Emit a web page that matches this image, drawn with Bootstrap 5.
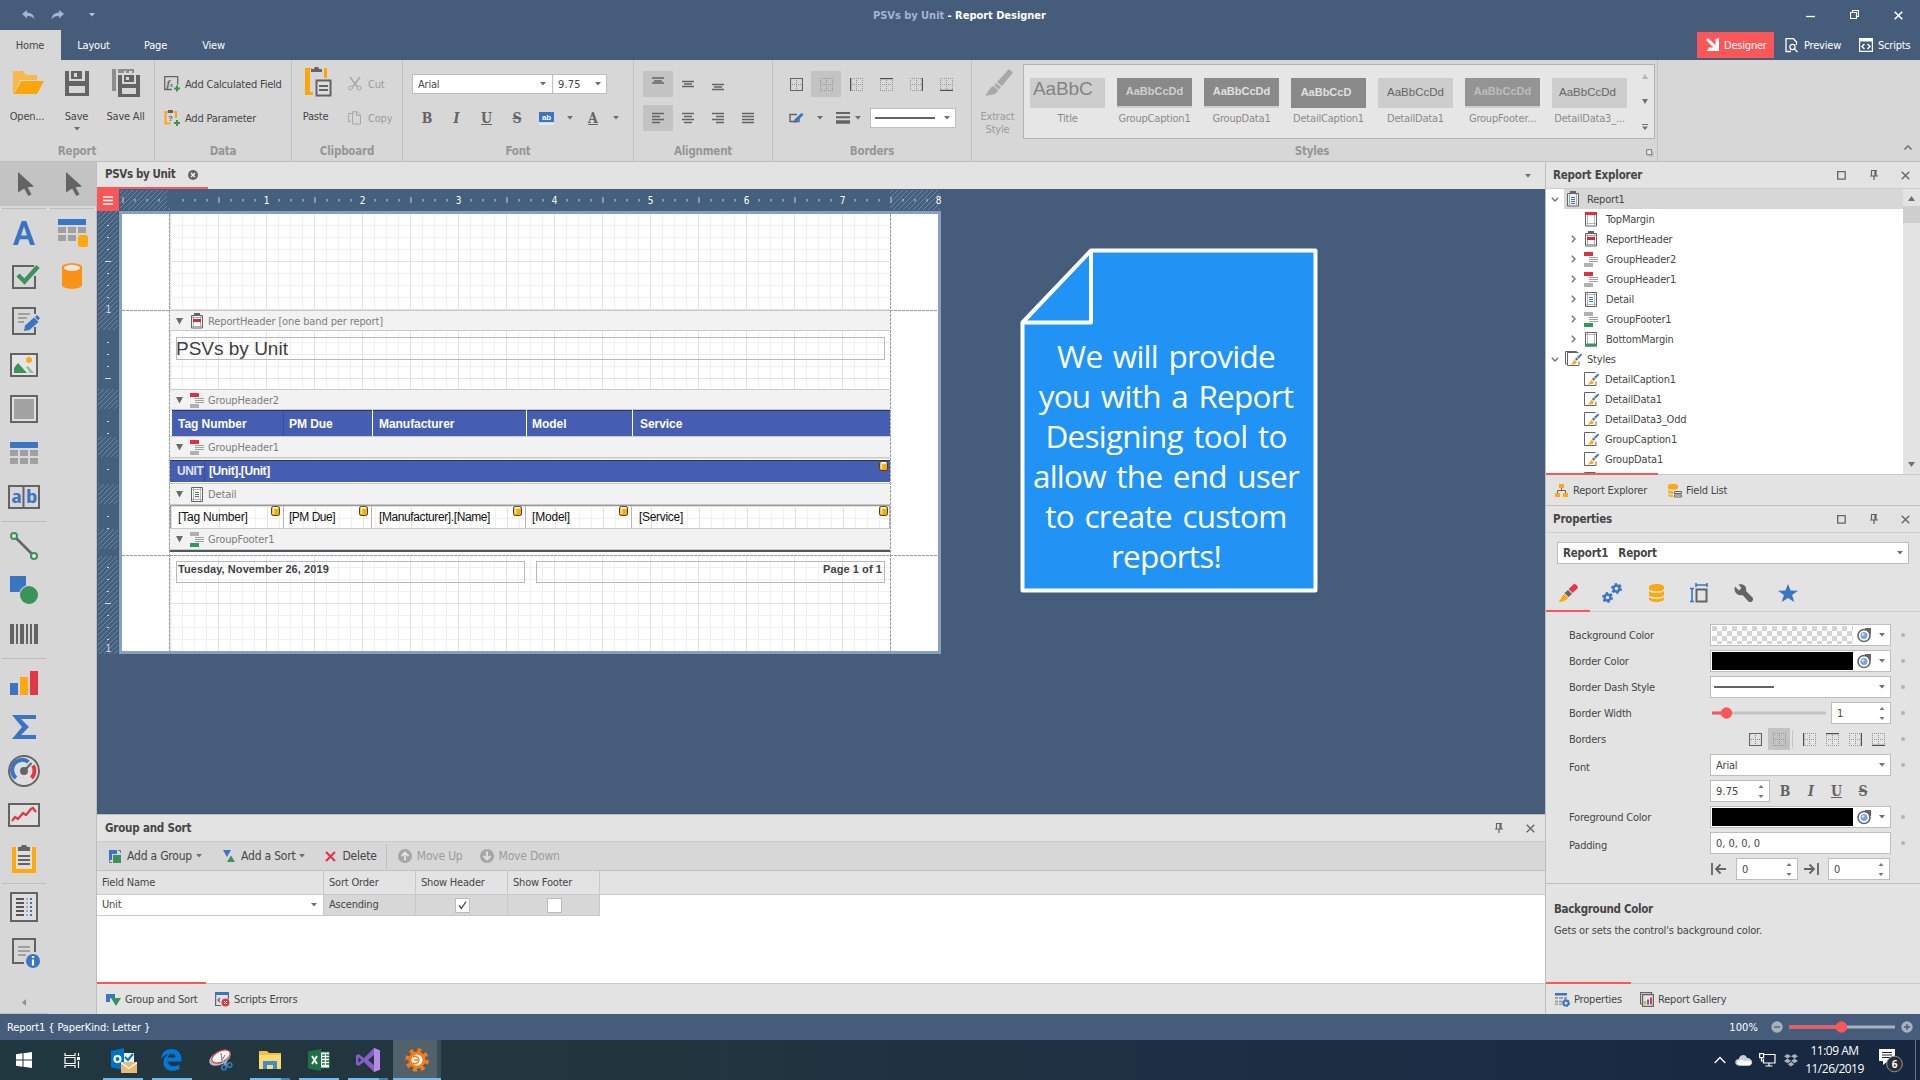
<!DOCTYPE html>
<html lang="en">
<head>
<meta charset="utf-8">
<title>PSVs by Unit - Report Designer</title>
<meta name="viewport" content="width=device-width, initial-scale=1">
<link rel="stylesheet" href="https://cdn.jsdelivr.net/npm/bootstrap@5.3.0/dist/css/bootstrap.min.css">
<style>
:root{--navy:#465c7b;--panel:#e3e3e3;--rib:#d7d7d7;--sel:#c3c3c3;--red:#fb5759;--ink:#464646;--line:#c6c6c6;--b:#3a75c4;--g:#3a9358;--y:#ffa90f;--k:#646464}
html,body{height:100%;overflow:hidden}
body{width:1920px;height:1080px;font-family:"DejaVu Sans Condensed","DejaVu Sans",sans-serif;font-stretch:condensed;font-size:11px;letter-spacing:-.2px;line-height:15px;color:var(--ink);background:var(--navy)}
svg{display:block;flex:none}
.fb{font-weight:700}
.arial{font-family:"Liberation Sans",Arial,sans-serif;letter-spacing:0}
.titlebar{height:30px;color:#fff;letter-spacing:-.03px}
.titlebar .dim{color:#a3b5d1}
.tabrow{height:30px;color:#fff}
.rtab{height:30px;line-height:32px;text-align:center;padding-right:1px}
.rtab.active{background:var(--rib);color:var(--ink)}
.viewbtn{height:26px;margin-top:2px}
.ribbon{height:102px;background:var(--rib);border-bottom:1px solid #bdbdbd}
.rgroup{border-right:1px solid #c0c0c0;height:101px;padding-top:7px}
.rgroup .gbody{height:74px}
.rgroup .gname{height:18px;line-height:18px;text-align:center;font-weight:700;font-size:11.5px;color:#969696;margin-top:1px}
.big{text-align:center}
.bigico{height:42px}
.off{color:#9b9b9b}
.r34{height:34px}
.fld{background:#fff;border:1px solid #bdbdbd}
.tb{width:30px;height:26px}
.tb.on{background:var(--sel)}
.slab{font-family:"DejaVu Serif","Liberation Serif",serif;font-stretch:condensed;font-weight:700;font-size:14px;color:var(--k);letter-spacing:0;line-height:16px;text-align:center}
.gallery{width:632px;height:75px;background:#e6e6e6;border:1.5px solid #b2b2b2;margin-top:-3px}
.gitem{width:87px;text-align:center;color:#8a8a8a;line-height:14px}
.gprev{width:75px;height:30px;line-height:28px;margin:13px 0 4px 6px;font-size:11.5px;overflow:hidden;white-space:nowrap}
.gi-dark,.gi-mid{font-weight:700;font-size:11px;line-height:27px;border-bottom:2px solid #cfcfcf}
.gi-dark{background:#898989;color:#d0d0d0}
.gi-mid{background:#949494;color:#bdbdbd}
.gi-light{background:#cdcdcd;color:#666}
.toolcol{width:48px}
.tcell{height:44px}
.tsep{height:5px;padding:2px 2px 0}
.tsep div{border-top:1px solid #bebebe}
.toolbox{width:97px;background:var(--rib);border-right:1px solid #bdbdbd}
.workarea{height:852px}
.doctabs{height:27px;background:var(--panel)}
.doctab{width:111px;height:27px;border-bottom:2px solid var(--red);font-size:11.5px}
.surface{height:625px;background:var(--navy)}
.sheet{width:822px;height:443px;border:3px solid #87a0bd;background:#fff}
.marg{width:48px;flex:none}
.canvas{width:720px;flex:none}
.gridbg{background-color:#fff;background-image:linear-gradient(to right,#e1e1e1 1px,transparent 1px),linear-gradient(#e1e1e1 1px,transparent 1px),linear-gradient(to right,#f0f0f0 1px,transparent 1px),linear-gradient(#f0f0f0 1px,transparent 1px);background-size:48px 48px,48px 48px,12px 12px,12px 12px}
.bandbar{background:#f2f2f2;border-top:1px solid #c9c9c9;border-bottom:1px solid #c9c9c9;color:#7d7d7d;padding:1px 0 0 6px;letter-spacing:-.12px}
.bandbar svg:first-child{margin-right:7px}
.lbx{border:1px solid #b9b9b9}
.thead-c{background:#455eb2;color:#fff;font-weight:700;border-top:1px solid #26356f;line-height:27px;font-size:12px;letter-spacing:-.05px;white-space:nowrap}
.dcell{border-right:1px solid #b5b5b5;color:#111;line-height:23px;font-size:12px;white-space:nowrap}
.dashh{position:absolute;height:1px;background:repeating-linear-gradient(to right,#9a9a9a 0 3px,transparent 3px 4px)}
.dashv{position:absolute;width:1px;top:0;bottom:0;background:repeating-linear-gradient(#9a9a9a 0 3px,transparent 3px 4px)}
.note{position:absolute;left:923px;top:59px;width:300px;height:345px}
.note svg{position:absolute;left:0;top:0}
.note p{position:relative;margin:0;padding:88px 8px 0 0;text-align:center;color:#fff;font:31.5px/40px "Open Sans","Noto Sans",sans-serif;letter-spacing:-.75px;word-spacing:3px;white-space:nowrap}
.gs{height:200px;background:#fff;border-top:1px solid #bdbdbd}
.phead{background:var(--panel);font-weight:700;font-size:11.5px}
.gstool{height:30px;background:var(--rib);border-top:1px solid #ccc;border-bottom:1px solid #c0c0c0;font-size:12px;letter-spacing:-.2px}
.gcol{border-right:1px solid #c9c9c9;padding-left:5px}
.chk{width:15px;height:15px;background:#fff;border:1px solid #bdbdbd}
.ptabs{height:31px;background:var(--panel);border-top:1px solid #c9c9c9}
.ptab{height:32px;margin-top:-2px;border-top:2px solid transparent;padding-top:1px}
.ptab.active{border-color:var(--red)}
.rpanel{width:375px;background:var(--panel);border-left:1px solid #bdbdbd}
.trow{height:20px}
.tree{height:285px;background:#fff;overflow:hidden}
.vscroll{width:17px;background:var(--panel)}
.prow{height:26px;padding-left:23px}
.plabel{width:141px}
.pfield{width:181px;height:22px;background:#fff;border:1px solid #bdbdbd}
.dot{width:4px;height:4px;border-radius:50%;background:#b3b3b3;margin-left:10px}
.swatch{width:141px;height:18px;margin-left:1px;background:#000}
.checker{background:conic-gradient(#fff 25%,#d4d4d4 0 50%,#fff 0 75%,#d4d4d4 0);background-size:10px 10px}
.statusbar{height:26px;color:#fff;letter-spacing:-.12px}
.taskbar{height:40px;background:linear-gradient(to right,#21373f,#22353f 35%,#1b2c44 75%,#182740);color:#fff;font-family:"Open Sans","Noto Sans",sans-serif;font-stretch:normal;font-size:12px;letter-spacing:-.5px}
.tk{width:49px;height:40px;position:relative}
.tk.run::after{content:"";position:absolute;left:5px;right:4px;bottom:0;height:2px;background:#76b9ed}
.tk.multi::after{background:linear-gradient(to right,#76b9ed 31px,#4c7fa8 31px)}
.tk.act{background:linear-gradient(to right,transparent 1px,#51626b 1px 45px,#3a4c56 45px)}
.tk.act::after{left:1px;right:0}
</style>
<script src="https://cdn.jsdelivr.net/npm/bootstrap@5.3.0/dist/js/bootstrap.bundle.min.js"></script>
</head>
<body class="d-flex flex-column">

<svg width="0" height="0" class="position-absolute">
  <defs>
    <symbol id="caret" viewBox="0 0 6 4"><path d="M0 0h6L3 3.500z" fill="#707070"/></symbol>
    <symbol id="dots" viewBox="0 0 13 13"><path d="M.5 0v13M6.500 0v13M12.500 0v13M0 .5h13M0 6.500h13M0 12.500h13" stroke="#969696" stroke-dasharray="1 1" fill="none"/></symbol>
    <symbol id="ball" viewBox="0 0 13 13"><path d="M6.500 2v9M2 6.500h9" stroke="#888" stroke-dasharray="1 1"/><path d="M.5.5h12v12H.5z" fill="none" stroke="#646464" stroke-width="1.200"/></symbol>
    <symbol id="rh" viewBox="0 0 14 16"><path d="M1.500 2.500h11v12.500h-11z" fill="#fff" stroke="#646464"/><path d="M3.500 3v12M10.500 3v12M2 4.500h10M2 13.500h10" stroke="#aaa"/><path d="M4 0h6v3H4z" fill="#646464"/><path d="M3 6h8v3H3z" fill="#e0243a"/></symbol>
    <symbol id="gh" viewBox="0 0 14 15"><path d="M0 0h9v4H0z" fill="#e0303e"/><path d="M0 11h9v4H0z" fill="#b0b0b0"/><path d="M5 5.500h9M5 7.500h9M5 9.500h9" stroke="#a0a0a0"/></symbol>
    <symbol id="gf" viewBox="0 0 14 15"><path d="M0 0h9v4H0z" fill="#b0b0b0"/><path d="M0 11h9v4H0z" fill="#2f9a58"/><path d="M5 5.500h9M5 7.500h9M5 9.500h9" stroke="#a0a0a0"/></symbol>
    <symbol id="det" viewBox="0 0 14 15"><path d="M1.500.5h11v14h-11z" fill="#fff" stroke="#646464"/><path d="M3.500 1v13M10.500 1v13M2 2.500h10M2 12.500h10" stroke="#b5b5b5"/><path d="M5 5.500h4M5 7.500h4M5 9.500h4" stroke="#3a75c4"/></symbol>
    <symbol id="tm" viewBox="0 0 14 15"><path d="M1.500.5h11v13.500h-11z" fill="#fff" stroke="#646464"/><path d="M3.500 2v12M10.500 2v12M2 11.500h10" stroke="#b5b5b5"/><path d="M1 0h12v3H1z" fill="#e0303e"/></symbol>
    <symbol id="bm" viewBox="0 0 14 15"><path d="M1.500.5h11v13.500h-11z" fill="#fff" stroke="#646464"/><path d="M3.500 1v12M10.500 1v12M2 2.500h10" stroke="#b5b5b5"/><path d="M1 11.500h12v3H1z" fill="#3a9358"/></symbol>
    <symbol id="rep" viewBox="0 0 14 16"><path d="M1.500 2.500h11v12.500h-11z" fill="#eee" stroke="#646464"/><path d="M3.500 3v12M10.500 3v12" stroke="#aaa"/><path d="M4 0h6v3H4z" fill="#646464"/><path d="M5 6.500h4M5 8.500h4M5 10.500h4M5 12.500h4" stroke="#3a75c4"/></symbol>
    <symbol id="sty" viewBox="0 0 15 15"><path d="M12 9.500v4H.5V.5h11" fill="none" stroke="#646464"/><path d="M14.500 1.200l-4.500 3.800 1.500 1.800 3.500-3.800z" fill="#3a75c4"/><path d="M9.500 5.500l-1.500 1.500 1.800 1.800 1.400-1.600z" fill="#646464"/><path d="M7.500 7.800L4 12.800l5-1 .8-1.800z" fill="#ffa90f"/></symbol>
    <symbol id="db" viewBox="0 0 9 10"><rect x=".5" y=".5" width="8" height="9" rx="1.800" fill="#f0ae1c" stroke="#5e3a08"/><path d="M1.800 1.800h5.400" stroke="#fff" stroke-width="1.800"/><path d="M1.500 3h1.800v5H1.500z" fill="#fde28a"/></symbol>
    <symbol id="ptr" viewBox="0 0 16 24"><path d="M0 0l16 14.500-6.500.7 4 7-3.300 1.800-4-7.500L0 20.500z" fill="#646464"/></symbol>
    <symbol id="tri" viewBox="0 0 7 7"><path d="M0 0h7L3.500 6.500z" fill="#6a6a6a"/></symbol>
    <symbol id="sq" viewBox="0 0 9 9"><path d="M.7.7h7.500v7.500H.7z" fill="none" stroke="#646464" stroke-width="1.300"/></symbol>
    <symbol id="pin" viewBox="0 0 8 10"><path d="M1 .5h6M1.500 0v6M5 0v6M6 0v6M0 6h8M4 6v4" stroke="#646464" stroke-width="1.200" fill="none"/></symbol>
    <symbol id="xx" viewBox="0 0 9 9"><path d="M.7.7l7.600 7.600M8.300.7L.7 8.300" stroke="#646464" stroke-width="1.300"/></symbol>
    <symbol id="eye" viewBox="0 0 15 15"><path d="M14 0v6H8V0z" fill="#646464"/><circle cx="7" cy="7.500" r="6" fill="#fff" stroke="#646464" stroke-width="1.600"/><circle cx="7" cy="7.500" r="3.500" fill="#7ba4de"/><circle cx="6" cy="6.500" r="1.300" fill="#cfe0f7"/></symbol>
    <symbol id="spin" viewBox="0 0 6 13"><path d="M.5 3h5L3 0zM.5 10h5L3 13z" fill="#777"/></symbol>
    <symbol id="cr" viewBox="0 0 5 8"><path d="M.8.8L4 4 .8 7.200" fill="none" stroke="#777" stroke-width="1.500"/></symbol>
    <symbol id="cd" viewBox="0 0 8 5"><path d="M.8.8L4 4 7.200.8" fill="none" stroke="#777" stroke-width="1.500"/></symbol>
    <pattern id="hatch" width="5" height="5" patternUnits="userSpaceOnUse"><path d="M-1 6L6 -1M-1 1L1 -1M4 6L6 4" stroke="#7189a9" stroke-width=".9"/></pattern>
    <pattern id="tkx" x="3.500" y="0" width="48" height="22" patternUnits="userSpaceOnUse"><path d="M.5 8v6M12.500 10v2.500M24.500 10v2.500M36.500 10v2.500" stroke="#c6d2e2"/></pattern>
  </defs>
</svg>

<!-- title bar -->
<header class="titlebar d-flex align-items-center">
  <div class="d-flex align-items-center" style="width:873px;padding-left:22px">
    <svg width="13" height="10"><path d="M0 4L5 0v2.500c5 .3 7 3 7.500 7C11 7 9 6 5 6v2.500z" fill="#a3b5d1"/></svg>
    <svg width="13" height="10" class="ms-3"><path d="M13 4L8 0v2.500C3 2.800 1 5.500.5 9.500 2 7 4 6 8 6v2.500z" fill="#a3b5d1"/></svg>
    <svg width="6" height="4" style="margin-left:25px"><path d="M0 0h6L3 3.500z" fill="#b7c4d8"/></svg>
  </div>
  <div class="fb flex-grow-1"><span class="dim">PSVs by Unit</span> - Report Designer</div>
  <div class="d-flex align-items-center" style="padding-right:17px;gap:35px">
    <svg width="9" height="9"><path d="M0 5.500h9" stroke="#fff" stroke-width="1.300"/></svg>
    <svg width="9" height="10"><path d="M.5 2.500h6v6h-6zM2.500 2.500v-2h6v6h-2" fill="none" stroke="#fff" stroke-width="1.200"/></svg>
    <svg width="9" height="9"><path d="M.7.7l7.600 7.600M8.300.7L.7 8.300" stroke="#fff" stroke-width="1.600"/></svg>
  </div>
</header>

<!-- ribbon tabs -->
<nav class="tabrow d-flex">
  <div class="rtab active" style="width:61px">Home</div>
  <div class="rtab" style="width:66px">Layout</div>
  <div class="rtab" style="width:58px">Page</div>
  <div class="rtab" style="width:58px">View</div>
  <div class="ms-auto d-flex">
    <div class="viewbtn d-flex align-items-center" style="background:var(--red);width:77px;padding-left:9px;gap:4px"><svg width="14" height="14"><path d="M0 2l2-2 7.500 7V1L13 0v13H1l2-3.500h4.500z" fill="#fff"/></svg>Designer</div>
    <div class="viewbtn d-flex align-items-center" style="width:84px;padding-left:11px;gap:5px"><svg width="14" height="15"><path d="M6 13.500H1V.7h7.500L11.500 4v3" fill="none" stroke="#fff" stroke-width="1.300"/><circle cx="7.500" cy="9" r="2.600" fill="none" stroke="#fff" stroke-width="1.200"/><path d="M9.500 11l3 3" stroke="#fff" stroke-width="1.300"/></svg>Preview</div>
    <div class="viewbtn d-flex align-items-center" style="width:62px;padding-left:1px;gap:5px"><svg width="14" height="14"><path d="M.6.6h12.800v12.800H.6z" fill="none" stroke="#fff" stroke-width="1.200"/><path d="M0 0h14v3.500H0z" fill="#fff"/><path d="M5.500 6L3 8.500 5.500 11M8.500 6L11 8.500 8.500 11" fill="none" stroke="#fff" stroke-width="1.400"/></svg>Scripts</div>
  </div>
</nav>

<!-- ribbon -->
<section class="ribbon d-flex">
  <div class="rgroup" style="width:155px">
    <div class="gbody d-flex">
      <div class="big" style="width:54px"><div class="bigico" style="padding:4px 0 0 13px"><svg width="31" height="23"><path d="M0 0h10l3 4h11v5H7L1 23H0z" fill="#f9b84c"/><path d="M8 10h23l-7 13H1z" fill="#ffa50a"/></svg></div>Open...</div>
      <div class="big" style="width:45px"><div class="bigico" style="padding:4px 0 0 11px"><svg width="24" height="25"><path d="M0 0h4v10h16V0h4v25H0zM4 15v7h16v-7z" fill="#646464" fill-rule="evenodd"/><path d="M6 0h11v8H6zM9 2v4h3V2z" fill="#646464" fill-rule="evenodd"/></svg></div>Save<div class="d-flex justify-content-center" style="margin-top:3px"><svg width="6" height="4"><use href="#caret"/></svg></div></div>
      <div class="big" style="width:53px"><div class="bigico" style="padding:2px 0 0 13px"><svg width="28" height="29"><path d="M0 0h4v22H0zM6 0h16v4h-2V2h-3v2h-3V2h-2v2H6z" fill="#8d8d8d"/><path d="M6 6h4v9h14V6h4v22H6zM10 19v6h14v-6z" fill="#646464" fill-rule="evenodd"/><path d="M12 6h10v7H12zM14 8v3h3V8z" fill="#646464" fill-rule="evenodd"/></svg></div>Save All</div>
    </div>
    <div class="gname">Report</div>
  </div>
  <div class="rgroup" style="width:137px">
    <div class="gbody" style="padding-left:9px">
      <div class="r34 d-flex align-items-center" style="gap:5px"><svg width="16" height="16"><path d="M8 13.500H.7V.7h13v8" fill="none" stroke="#646464" stroke-width="1.300"/><text x="2.500" y="10.500" font-family="Liberation Serif" font-style="italic" font-weight="700" font-size="11" fill="#646464" letter-spacing="-.5">f<tspan font-size="7">x</tspan></text><path d="M10 12.500h6M13 9.500v6" stroke="#3a9358" stroke-width="2"/></svg>Add Calculated Field</div>
      <div class="r34 d-flex align-items-center" style="gap:5px"><svg width="16" height="16"><path d="M4 2H1.500v11.500h5M10 2h2v6" fill="none" stroke="#ffa50a" stroke-width="2"/><path d="M4 0h5v3H4z" fill="#646464"/><text x="4" y="11" font-family="Liberation Sans" font-weight="700" font-size="8" fill="#646464">?</text><path d="M10 13h6M13 10v6" stroke="#3a9358" stroke-width="2"/></svg>Add Parameter</div>
    </div>
    <div class="gname">Data</div>
  </div>
  <div class="rgroup" style="width:111px">
    <div class="gbody d-flex">
      <div class="big" style="width:47px"><div class="bigico" style="padding-left:13px"><svg width="27" height="31"><path d="M7 2H2v23h6v3H0V1h7zM19 1h3v10h-3V4z" fill="#ffa50a"/><path d="M0 2h5v26H0z" fill="#ffa50a"/><path d="M6 5V2h3c0-3 5-3 5 0h3v3z" fill="#646464"/><path d="M11.500 13.500h14v15h-14z" fill="#ddd" stroke="#646464" stroke-width="2"/><path d="M14 19h9M14 23h9" stroke="#646464" stroke-width="2"/></svg></div>Paste</div>
      <div style="padding-left:9px">
        <div class="r34 d-flex align-items-center off" style="gap:6px"><svg width="14" height="14"><path d="M2 0l7.500 10M12 0L4.500 10" stroke="#a8a8a8" stroke-width="1.600"/><circle cx="2.500" cy="11" r="2" fill="none" stroke="#a8a8a8"/><circle cx="11" cy="11" r="2" fill="none" stroke="#a8a8a8"/></svg>Cut</div>
        <div class="r34 d-flex align-items-center off" style="gap:6px"><svg width="14" height="14"><path d="M3 10.500H.7V2.500h5M4.500.7H9L12.500 4v9h-8z" fill="none" stroke="#a8a8a8"/><path d="M8.500 1v3.500H12" fill="none" stroke="#a8a8a8"/></svg>Copy</div>
      </div>
    </div>
    <div class="gname">Clipboard</div>
  </div>
  <div class="rgroup" style="width:231px">
    <div class="gbody" style="padding-left:9px">
      <div class="r34 d-flex align-items-center">
        <div class="fld d-flex align-items-center justify-content-between" style="width:141px;height:20px;padding:0 6px 0 5px">Arial<svg width="6" height="4"><use href="#caret"/></svg></div>
        <div class="fld d-flex align-items-center justify-content-between" style="width:55px;height:20px;padding:0 5px;margin-left:-1px;letter-spacing:.2px">9.75<svg width="6" height="4"><use href="#caret"/></svg></div>
      </div>
      <div class="r34 d-flex align-items-center">
        <div class="slab" style="width:30px">B</div><div class="slab fst-italic" style="width:29px">I</div><div class="slab text-decoration-underline" style="width:31px">U</div><div class="slab text-decoration-line-through" style="width:30px">S</div>
        <svg width="15" height="13" style="margin:0 13px 0 7px"><rect width="15" height="10" fill="#3a75c4"/><rect y="11" width="15" height="2" fill="#e8e8e8"/><text x="3" y="8" font-family="Liberation Sans" font-weight="700" font-size="8" letter-spacing="-.3" fill="#fff">ab</text></svg>
        <svg width="6" height="4"><use href="#caret"/></svg>
        <div class="slab text-decoration-underline" style="width:40px">A</div><svg width="6" height="4"><use href="#caret"/></svg>
      </div>
    </div>
    <div class="gname">Font</div>
  </div>
  <div class="rgroup" style="width:139px">
    <div class="gbody" style="padding-left:9px">
      <div class="r34 d-flex align-items-center">
        <div class="tb on"><svg width="30" height="26"><path d="M9 7h12M11 10h8M9 12h12" stroke="#646464" stroke-width="1.500"/></svg></div>
        <div class="tb"><svg width="30" height="26"><path d="M9 10.500h12M11 13h8M9 15.500h12" stroke="#646464" stroke-width="1.500"/></svg></div>
        <div class="tb"><svg width="30" height="26"><path d="M9 13.500h12M11 16h8M9 18.500h12" stroke="#646464" stroke-width="1.500"/></svg></div>
      </div>
      <div class="r34 d-flex align-items-center">
        <div class="tb on"><svg width="30" height="26"><path d="M9 8.500h12M9 11.500h8M9 14.500h12M9 17.500h8" stroke="#646464" stroke-width="1.500"/></svg></div>
        <div class="tb"><svg width="30" height="26"><path d="M9 8.500h12M11 11.500h8M9 14.500h12M11 17.500h8" stroke="#646464" stroke-width="1.500"/></svg></div>
        <div class="tb"><svg width="30" height="26"><path d="M9 8.500h12M13 11.500h8M9 14.500h12M13 17.500h8" stroke="#646464" stroke-width="1.500"/></svg></div>
        <div class="tb"><svg width="30" height="26"><path d="M9 8.500h12M9 11.500h12M9 14.500h12M9 17.500h12" stroke="#646464" stroke-width="1.500"/></svg></div>
      </div>
    </div>
    <div class="gname">Alignment</div>
  </div>
  <div class="rgroup" style="width:199px">
    <div class="gbody" style="padding-left:8px">
      <div class="r34 d-flex align-items-center">
        <div class="tb d-flex align-items-center justify-content-center"><svg width="13" height="13"><use href="#ball"/></svg></div>
        <div class="tb on d-flex align-items-center justify-content-center"><svg width="13" height="13"><use href="#dots"/></svg></div>
        <div class="tb d-flex align-items-center justify-content-center"><svg width="13" height="13"><use href="#dots"/><path d="M.6 0v13" stroke="#505050" stroke-width="1.300"/></svg></div>
        <div class="tb d-flex align-items-center justify-content-center"><svg width="13" height="13"><use href="#dots"/><path d="M0 .6h13" stroke="#505050" stroke-width="1.300"/></svg></div>
        <div class="tb d-flex align-items-center justify-content-center"><svg width="13" height="13"><use href="#dots"/><path d="M12.400 0v13" stroke="#505050" stroke-width="1.300"/></svg></div>
        <div class="tb d-flex align-items-center justify-content-center"><svg width="13" height="13"><use href="#dots"/><path d="M0 12.400h13" stroke="#505050" stroke-width="1.300"/></svg></div>
      </div>
      <div class="r34 d-flex align-items-center" style="padding-left:8px">
        <svg width="15" height="11"><path d="M8 1.500H1v7h9V6" fill="none" stroke="#646464" stroke-width="1.400"/><path d="M4.500 10l1-3.500L12.500 0l2 1.500L8 9z" fill="#3a75c4"/></svg>
        <svg width="6" height="4" style="margin-left:13px"><use href="#caret"/></svg>
        <svg width="14" height="12" style="margin-left:13px"><path d="M0 1h14M0 5.200h14" stroke="#646464" stroke-width="2"/><path d="M0 10h14" stroke="#646464" stroke-width="3.500"/></svg>
        <svg width="6" height="4" style="margin-left:5px"><use href="#caret"/></svg>
        <div class="fld d-flex align-items-center justify-content-between" style="width:86px;height:20px;margin-left:9px;padding:0 5px 0 4px"><svg width="60" height="2"><path d="M0 1h60" stroke="#646464" stroke-width="2"/></svg><svg width="6" height="4"><use href="#caret"/></svg></div>
      </div>
    </div>
    <div class="gname">Borders</div>
  </div>
  <div class="rgroup" style="width:686px">
    <div class="gbody d-flex">
      <div class="big off" style="width:51px;line-height:13px"><div class="bigico" style="padding:2px 0 0 13px;height:43px"><svg width="28" height="27"><path d="M24 0l4 3.500L17 17l-5-4z" fill="#a8a8a8"/><path d="M11 14l5 4-2 2.500-4.500-4z" fill="#a8a8a8"/><path d="M8.500 17l4.500 4c-1 4-6 5.500-13 5.500 3-2 4-8 8.500-9.500z" fill="#a8a8a8"/></svg></div>Extract<br>Style</div>
      <div class="gallery d-flex">
        <div class="gitem"><div class="gprev gi-light arial text-start" style="font-size:19px;line-height:21px;color:#848484;padding-left:3px;letter-spacing:-.1px">AaBbC</div>Title</div>
        <div class="gitem"><div class="gprev gi-dark arial">AaBbCcDd</div>GroupCaption1</div>
        <div class="gitem"><div class="gprev gi-dark arial" style="color:#e0e0e0">AaBbCcDd</div>GroupData1</div>
        <div class="gitem"><div class="gprev gi-dark arial" style="border-color:#898989;color:#e0e0e0;line-height:29px;padding-right:5px">AaBbCcD</div>DetailCaption1</div>
        <div class="gitem"><div class="gprev gi-light arial">AaBbCcDd</div>DetailData1</div>
        <div class="gitem"><div class="gprev gi-mid arial">AaBbCcDd</div>GroupFooter...</div>
        <div class="gitem"><div class="gprev gi-light arial" style="padding-right:4px">AaBbCcDd</div>DetailData3_...</div>
        <div class="d-flex flex-column" style="padding:9px 0 0 9px;gap:20px"><svg width="7" height="5"><path d="M0 5h6L3 0z" fill="#b5b5b5"/></svg><svg width="7" height="5"><path d="M0 0h6L3 5z" fill="#707070"/></svg><svg width="7" height="7"><path d="M0 .5h6" stroke="#707070"/><path d="M0 2.500h6L3 6z" fill="#707070"/></svg></div>
      </div>
    </div>
    <div class="d-flex"><div class="gname flex-grow-1" style="padding-right:5px">Styles</div><svg width="8" height="8" style="margin:8px 3px 0 -11px"><path d="M.7.7h5v5h-5z" fill="#e8e8e8" stroke="#777"/><path d="M3 7h4V3" fill="none" stroke="#aaa"/></svg></div>
  </div>
  <div class="flex-grow-1 d-flex justify-content-end align-items-end" style="padding:0 8px 11px 0"><svg width="8" height="5"><path d="M.5 4.500L4 1l3.500 3.500" fill="none" stroke="#777" stroke-width="1.600"/></svg></div>
</section>

<!-- work area -->
<main class="workarea d-flex">
  <aside class="toolbox d-flex">
    <div class="toolcol">
      <div class="tcell d-flex align-items-center justify-content-center" style="background:var(--sel);padding-left:3px"><svg width="16" height="24"><use href="#ptr"/></svg></div>
      <div class="tsep"><div></div></div>
      <div class="tcell d-flex align-items-center justify-content-center"><svg width="22" height="24"><path d="M8.700 0h4.600L22 24h-4.800l-2-5.800H6.800L4.800 24H0zM11 5.500L8 14.500h6z" fill="#3a75c4" fill-rule="evenodd"/></svg></div>
      <div class="tcell d-flex align-items-center justify-content-center" style="padding-left:3px"><svg width="28" height="26"><path d="M22 2H1v22h22V12" fill="none" stroke="#646464" stroke-width="2"/><path d="M6 11l6.500 6.500L26 2.500" fill="none" stroke="#3a9358" stroke-width="4.500"/></svg></div>
      <div class="tcell d-flex align-items-center justify-content-center" style="padding-left:3px"><svg width="28" height="28"><path d="M23 7V1H1v26h22v-7" fill="none" stroke="#646464" stroke-width="2"/><path d="M6 7h12M6 11h9M6 15h6" stroke="#a0a0a0" stroke-width="2"/><path d="M12 24l1-5.500 9-8 4.500 4.500-9 8z" fill="#3a75c4"/><path d="M23 10l2-2 3 3-2 2.500z" fill="#3a75c4"/></svg></div>
      <div class="tcell d-flex align-items-center justify-content-center"><svg width="28" height="24"><path d="M1 1h26v22H1z" fill="#e4e4e4" stroke="#646464" stroke-width="2"/><path d="M4 20v-5l4-5 9 10z" fill="#3a9358"/><path d="M16 14l2-1 6 7h-4z" fill="#86c49a"/><circle cx="19" cy="7" r="3" fill="#ffa90f"/></svg></div>
      <div class="tcell d-flex align-items-center justify-content-center"><svg width="28" height="28"><path d="M1 1h26v26H1z" fill="#e0e0e0" stroke="#646464" stroke-width="2"/><path d="M4 4h20v20H4z" fill="#a2a2a2"/></svg></div>
      <div class="tcell d-flex align-items-center justify-content-center"><svg width="28" height="22"><path d="M0 0h28v6H0z" fill="#3a75c4"/><path d="M0 8h8v6H0zM10 8h8v6h-8zM20 8h8v6h-8zM0 16h8v6H0zM10 16h8v6h-8zM20 16h8v6h-8z" fill="#a0a0a0"/></svg></div>
      <div class="tcell d-flex align-items-center justify-content-center"><svg width="32" height="24"><path d="M1 1h30v22H1zM15.500 0v24" fill="none" stroke="#646464" stroke-width="2"/><text x="3.500" y="18" font-family="Open Sans" font-weight="700" font-size="17" fill="#3a75c4" textLength="10" lengthAdjust="spacingAndGlyphs">a</text><text x="18" y="18" font-family="Open Sans" font-weight="700" font-size="17" fill="#3a75c4" textLength="11" lengthAdjust="spacingAndGlyphs">b</text></svg></div>
      <div class="tsep"><div></div></div>
      <div class="tcell d-flex align-items-center justify-content-center"><svg width="28" height="28"><path d="M6 6l16 16" stroke="#646464" stroke-width="2.500"/><circle cx="4" cy="4" r="3" fill="#e8e8e8" stroke="#3a9358" stroke-width="2"/><circle cx="24" cy="24" r="3" fill="#e8e8e8" stroke="#3a9358" stroke-width="2"/></svg></div>
      <div class="tcell d-flex align-items-center justify-content-center"><svg width="28" height="28"><path d="M0 0h16v16H0z" fill="#3a75c4"/><circle cx="19" cy="19" r="10" fill="#d7d7d7"/><circle cx="19" cy="19" r="9" fill="#3a9358"/></svg></div>
      <div class="tcell d-flex align-items-center justify-content-center"><svg width="28" height="20"><path d="M0 0h4v20H0zM6 0h2v20H6zM10 0h4v20h-4zM16 0h2v20h-2zM20 0h2v20h-2zM24 0h4v20h-4z" fill="#646464"/></svg></div>
      <div class="tsep"><div></div></div>
      <div class="tcell d-flex align-items-center justify-content-center"><svg width="28" height="24"><path d="M0 12h8v12H0z" fill="#3a75c4"/><path d="M10 6h8v18h-8z" fill="#ffa90f"/><path d="M20 0h8v24h-8z" fill="#e03848"/></svg></div>
      <div class="tcell d-flex align-items-center justify-content-center"><svg width="24" height="24"><path d="M0 0h24v4H9l8 8-8 8h15v4H0l10-12z" fill="#3a75c4"/></svg></div>
      <div class="tcell d-flex align-items-center justify-content-center"><svg width="32" height="32"><circle cx="16" cy="16" r="15" fill="#dedede" stroke="#646464" stroke-width="2"/><path d="M8 23A10 10 0 0 1 20.500 7" fill="none" stroke="#3a75c4" stroke-width="4"/><path d="M25 10.500A10 10 0 0 1 23.500 23" fill="none" stroke="#e03848" stroke-width="4"/><circle cx="16" cy="16" r="4" fill="#646464"/><path d="M16 16l7.500-8" stroke="#646464" stroke-width="2"/></svg></div>
      <div class="tcell d-flex align-items-center justify-content-center"><svg width="32" height="24"><path d="M1 1h30v22H1z" fill="#e0e0e0" stroke="#646464" stroke-width="2"/><path d="M4 18l3-4 3 2 5-6 3 2 5-6 2-1 3 4" fill="none" stroke="#e03848" stroke-width="2.200"/></svg></div>
      <div class="tcell d-flex align-items-center justify-content-center"><svg width="24" height="28"><path d="M0 2h24v26H0z" fill="#ffa90f"/><path d="M4 2h16v22H4z" fill="#dedede"/><path d="M6 6V2h3c0-3 6-3 6 0h3v4z" fill="#646464"/><path d="M6 11h12M6 15h12M6 19h12" stroke="#646464" stroke-width="2"/></svg></div>
      <div class="tsep"><div></div></div>
      <div class="tcell d-flex align-items-center justify-content-center" style="padding-bottom:2px"><svg width="28" height="30"><path d="M1 1h26v28H1z" fill="#dedede" stroke="#646464" stroke-width="2"/><path d="M6 7h8M6 11h8M6 15h8M6 19h8M6 23h8" stroke="#555" stroke-width="2"/><path d="M16 7h2M16 11h2M16 15h2M16 19h2M16 23h2" stroke="#aaa" stroke-width="2"/><path d="M20 7h2M20 11h2M20 15h2M20 19h2M20 23h2" stroke="#3a75c4" stroke-width="2"/></svg></div>
      <div class="tcell d-flex align-items-center justify-content-center" style="padding:2px 0 0 4px"><svg width="28" height="30"><path d="M12 25H1V1h22v13" fill="none" stroke="#646464" stroke-width="2"/><path d="M6 9h12M6 13h12M6 17h8" stroke="#a0a0a0" stroke-width="2"/><circle cx="21" cy="23" r="7" fill="#3a75c4"/><path d="M21 18v2M21 21.500v6" stroke="#fff" stroke-width="2.200"/></svg></div>
      <div class="d-flex align-items-end justify-content-center" style="height:40px;padding-bottom:7px;border-bottom:1px solid #bdbdbd"><svg width="4" height="7"><path d="M4 0v7L0 3.500z" fill="#909090"/></svg></div>
    </div>
    <div class="toolcol">
      <div class="tcell d-flex align-items-center justify-content-center" style="background:var(--sel);padding-left:3px"><svg width="16" height="24"><use href="#ptr"/></svg></div>
      <div class="tsep"><div></div></div>
      <div class="tcell d-flex align-items-center justify-content-center" style="padding-left:2px"><svg width="30" height="28"><path d="M0 0h28v6H0z" fill="#3a75c4"/><path d="M0 8h8v6H0zM10 8h8v6h-8zM20 8h8v6h-8zM0 16h8v6H0zM10 16h8v6h-8z" fill="#a0a0a0"/><rect x="20" y="16" width="10" height="12" rx="2.500" fill="#ffa90f"/></svg></div>
      <div class="tcell d-flex align-items-center justify-content-center" style="padding-bottom:2px"><svg width="20" height="26"><path d="M0 4v18c0 5 20 5 20 0V4c0-5-20-5-20 0z" fill="#fa9216"/><ellipse cx="10" cy="4.800" rx="8" ry="3" fill="#e6e6e6"/></svg></div>
    </div>
  </aside>

  <section class="d-flex flex-column" style="width:1448px">
    <div class="doctabs d-flex">
      <div class="doctab fb d-flex align-items-center" style="padding-left:8px;gap:13px;letter-spacing:-.38px">PSVs by Unit<svg width="10" height="10"><circle cx="5" cy="5" r="5" fill="#646464"/><path d="M3 3l4 4M7 3L3 7" stroke="#eee" stroke-width="1.500"/></svg></div>
      <div class="ms-auto" style="padding:12px 14px 0 0"><svg width="6" height="4"><use href="#caret"/></svg></div>
    </div>

    <div class="surface position-relative">
      <div class="d-flex">
        <div style="width:22px;height:22px;background:var(--red);padding:7px 0 0 6px"><svg width="10" height="9"><path d="M0 1h10M0 4.500h10M0 8h10" stroke="#fff" stroke-width="1.300"/></svg></div>
        <svg width="824" height="22" font-family="DejaVu Sans Condensed,DejaVu Sans" font-size="10" fill="#fff" text-anchor="middle">
          <rect width="822" height="22" fill="#45607c"/>
          <rect x="1" y="1" width="50" height="20" fill="url(#hatch)"/><rect x="771" y="1" width="50" height="20" fill="url(#hatch)"/>
          <rect x="3" width="814" height="22" fill="url(#tkx)"/>
          <g fill="#45607c"><path d="M143 4h10v14h-10zM239 4h10v14h-10zM335 4h10v14h-10zM431 4h10v14h-10zM527 4h10v14h-10zM623 4h10v14h-10zM719 4h10v14h-10zM48 4h6v14h-6z"/></g>
          <text x="147.500" y="14.500">1</text><text x="243.500" y="14.500">2</text><text x="339.500" y="14.500">3</text><text x="435.500" y="14.500">4</text><text x="531.500" y="14.500">5</text><text x="627.500" y="14.500">6</text><text x="723.500" y="14.500">7</text><text x="819.500" y="14.500">8</text>
        </svg>
      </div>
      <div class="d-flex">
        <svg width="22" height="443" font-family="DejaVu Sans Condensed,DejaVu Sans" font-size="10" fill="#cfdae8">
          <rect width="21" height="443" fill="#45607c"/>
          <path d="M1 0h20v119H1zM1 178h20v20H1zM1 226h20v20H1zM1 273h20v20H1zM1 318h20v20H1zM1 345h20v98H1z" fill="url(#hatch)"/>
          <path d="M10 14.500h2M10 26.500h2M10 38.500h2M8 50.500h6M10 62.500h2M10 74.500h2M10 86.500h2M10 131.500h2M10 143.500h2M10 155.500h2M8 167.500h6M10 210.500h2M10 222.500h2M10 258.500h2M10 305.500h2M10 317.500h2M10 356.500h2M10 368.500h2M10 380.500h2M8 392.500h6M10 404.500h2M10 416.500h2M10 428.500h2" stroke="#cfdae8"/>
          <text x="8.500" y="102">1</text><text x="8.500" y="441">1</text>
        </svg>
        <div class="sheet position-relative d-flex">
          <div class="marg"></div>
          <div class="canvas">
            <div class="gridbg" style="height:96px;background-position-y:-1px"></div>
            <div class="bandbar d-flex align-items-center" style="height:21px"><svg width="7" height="7"><use href="#tri"/></svg><svg width="14" height="16" class="me-1"><use href="#rh"/></svg>ReportHeader [one band per report]</div>
            <div class="gridbg" style="height:58px;padding:6px 5px 0 6px;background-position-y:-1px"><div class="lbx arial" style="height:23px;font-size:19px;line-height:22px;color:#404040;text-indent:-1px">PSVs by Unit</div></div>
            <div class="bandbar d-flex align-items-center" style="height:21px"><svg width="7" height="7"><use href="#tri"/></svg><svg width="14" height="15" class="me-1"><use href="#gh"/></svg>GroupHeader2</div>
            <div class="d-flex arial" style="height:26px;padding-left:2px">
              <div class="thead-c" style="width:112px;padding-left:6px;border-right:1px solid #344c9c">Tag Number</div>
              <div class="thead-c" style="width:88px;padding-left:5px;margin-right:1px">PM Due</div>
              <div class="thead-c" style="width:153px;padding-left:6px;margin-right:1px">Manufacturer</div>
              <div class="thead-c" style="width:105px;padding-left:5px;margin-right:1px">Model</div>
              <div class="thead-c flex-grow-1" style="padding-left:7px">Service</div>
            </div>
            <div class="bandbar d-flex align-items-center" style="height:22px"><svg width="7" height="7"><use href="#tri"/></svg><svg width="14" height="15" class="me-1"><use href="#gh"/></svg>GroupHeader1</div>
            <div class="gridbg arial" style="height:25px;padding-top:2px">
              <div class="d-flex" style="border-bottom:1px solid #fff"><div class="thead-c" style="width:35px;padding-left:7px;height:22px;line-height:21px;color:#dfe3f3;border-right:1px solid #344c9c;letter-spacing:-.4px">UNIT</div><div class="thead-c d-flex flex-grow-1" style="padding:0 2px 0 4px;height:22px;line-height:21px;letter-spacing:-.4px">[Unit].[Unit]<svg width="9" height="10" class="ms-auto"><use href="#db"/></svg></div></div>
            </div>
            <div class="bandbar d-flex align-items-center" style="height:22px"><svg width="7" height="7"><use href="#tri"/></svg><svg width="14" height="15" class="me-1"><use href="#det"/></svg>Detail</div>
            <div class="gridbg arial d-flex" style="height:23px;border-top:1px solid #999;border-left:1px solid #999">
              <div class="dcell d-flex" style="width:113px;padding:0 3px 0 7px;letter-spacing:-.2px">[Tag Number]<svg width="9" height="10" class="ms-auto"><use href="#db"/></svg></div>
              <div class="dcell d-flex" style="width:88px;padding:0 3px 0 5px;letter-spacing:-.5px">[PM Due]<svg width="9" height="10" class="ms-auto"><use href="#db"/></svg></div>
              <div class="dcell d-flex" style="width:154px;padding:0 3px 0 7px;letter-spacing:-.4px">[Manufacturer].[Name]<svg width="9" height="10" class="ms-auto"><use href="#db"/></svg></div>
              <div class="dcell d-flex" style="width:106px;padding:0 3px 0 6px;letter-spacing:-.2px">[Model]<svg width="9" height="10" class="ms-auto"><use href="#db"/></svg></div>
              <div class="dcell d-flex flex-grow-1" style="padding:0 1px 0 7px;letter-spacing:-.3px">[Service]<svg width="9" height="10" class="ms-auto"><use href="#db"/></svg></div>
            </div>
            <div class="bandbar d-flex align-items-center" style="height:22px"><svg width="7" height="7"><use href="#tri"/></svg><svg width="14" height="15" class="me-1"><use href="#gf"/></svg>GroupFooter1</div>
            <div style="height:5px;border-top:2px solid #50555e"></div>
            <div class="gridbg arial fb d-flex" style="height:96px;padding:6px 5px 0 6px;font-size:11px;color:#404247;letter-spacing:.08px">
              <div class="lbx" style="width:349px;height:22px;line-height:14px;padding-left:1px">Tuesday, November 26, 2019</div>
              <div class="lbx text-end" style="width:349px;height:22px;line-height:14px;margin-left:11px;padding-right:2px">Page 1 of 1</div>
            </div>
          </div>
          <div class="dashv" style="left:47px"></div><div class="dashv" style="left:768px"></div>
          <div class="dashh" style="left:0;width:48px;top:96px"></div><div class="dashh" style="left:768px;width:48px;top:96px"></div>
          <div class="dashh" style="left:0;width:816px;top:341px"></div>
        </div>
      </div>
      <div class="note">
        <svg width="300" height="345"><path d="M2 74.500L70.500 2.500h224.500v340H2z" transform="translate(0.500 0)" fill="#2193f5" stroke="#fff" stroke-width="4" stroke-linejoin="round"/><path d="M71 2.500v72H2.500" fill="none" stroke="#fff" stroke-width="4" stroke-linejoin="round"/></svg>
        <p>We will provide<br>you with a Report<br>Designing tool to<br>allow the end user<br>to create custom<br>reports!</p>
      </div>
    </div>

    <div class="gs d-flex flex-column">
      <div class="phead d-flex align-items-center" style="height:26px;padding:0 10px 0 8px">Group and Sort<svg width="8" height="10" class="ms-auto" style="margin-right:23px"><use href="#pin"/></svg><svg width="9" height="9"><use href="#xx"/></svg></div>
      <div class="gstool d-flex align-items-center" style="padding-left:12px">
        <svg width="12" height="13"><path d="M0 0h8v4H3v6H0z" fill="#3a75c4"/><path d="M4 5h8v8H4z" fill="#3a9358"/><path d="M9 .5h2.500V3M.5 10v2.500H3" fill="none" stroke="#777"/></svg>
        <span style="margin:0 4px 0 6px">Add a Group</span><svg width="6" height="4"><use href="#caret"/></svg>
        <svg width="12" height="13" style="margin:0 6px 0 21px"><path d="M0 0h8L4 7z" fill="#3a75c4"/><path d="M4 12h8L8 5.500z" fill="#3a9358"/></svg>
        <span style="margin-right:4px">Add a Sort</span><svg width="6" height="4"><use href="#caret"/></svg>
        <svg width="11" height="11" style="margin:0 6px 0 20px"><path d="M1 1l9 9M10 1L1 10" stroke="#e03848" stroke-width="2.200"/></svg>Delete
        <div style="height:25px;border-left:1px solid #c0c0c0;margin:0 11px 0 9px"></div>
        <svg width="14" height="14"><circle cx="7" cy="7" r="7" fill="#a6a6a6"/><path d="M7 11.500V4M3.500 7L7 3.500 10.500 7" fill="none" stroke="#e3e3e3" stroke-width="1.800"/></svg><span class="off" style="margin:0 17px 0 5px">Move Up</span>
        <svg width="14" height="14"><circle cx="7" cy="7" r="7" fill="#a6a6a6"/><path d="M7 2.500V10M3.500 7L7 10.500 10.500 7" fill="none" stroke="#e3e3e3" stroke-width="1.800"/></svg><span class="off" style="margin-left:5px">Move Down</span>
      </div>
      <div class="d-flex" style="height:24px;line-height:23px;background:var(--panel);border-bottom:1px solid #c9c9c9">
        <div class="gcol" style="width:227px">Field Name</div><div class="gcol" style="width:92px">Sort Order</div><div class="gcol" style="width:92px">Show Header</div><div class="gcol" style="width:92px">Show Footer</div>
      </div>
      <div class="d-flex" style="height:21px;line-height:20px">
        <div class="gcol d-flex align-items-center justify-content-between" style="width:227px;padding-right:6px;border-bottom:1px solid #c9c9c9">Unit<svg width="6" height="4"><use href="#caret"/></svg></div>
        <div class="d-flex" style="background:var(--rib);border-bottom:1px solid #c9c9c9">
          <div class="gcol" style="width:92px">Ascending</div>
          <div class="gcol" style="width:92px;padding:3px 0 0 39px"><div class="chk"><svg width="13" height="13"><path d="M3 6.500L5.500 9.500 10 2.500" fill="none" stroke="#464646" stroke-width="1.300"/></svg></div></div>
          <div class="gcol" style="width:92px;padding:3px 0 0 39px"><div class="chk"></div></div>
        </div>
      </div>
      <div class="ptabs d-flex mt-auto">
        <div class="ptab active d-flex align-items-center" style="width:109px;padding-left:9px;gap:4px"><svg width="15" height="12"><path d="M0 0h9v4H4v4H0z" fill="#3a75c4"/><path d="M5 4h10l-5 8z" fill="#3a9358"/></svg>Group and Sort</div>
        <div class="ptab d-flex align-items-center" style="padding-left:9px;gap:4px"><svg width="15" height="15"><path d="M6 13.500H.6V1h12.800v6" fill="none" stroke="#646464" stroke-width="1.200"/><path d="M0 0h14v3H0z" fill="#3a75c4"/><path d="M5 6L3 8l2 2" fill="none" stroke="#646464" stroke-width="1.300"/><circle cx="10.500" cy="10.500" r="4" fill="#e03848"/><path d="M9 9l3 3M12 9l-3 3" stroke="#fff"/></svg>Scripts Errors</div>
      </div>
    </div>
  </section>

  <!-- right dock -->
  <aside class="rpanel d-flex flex-column">
    <div class="phead d-flex align-items-center" style="height:27px;border-bottom:1px solid #ccc;padding:0 10px 0 7px">Report Explorer<svg width="9" height="9" class="ms-auto"><use href="#sq"/></svg><svg width="8" height="10" style="margin:0 23px 0 24px"><use href="#pin"/></svg><svg width="9" height="9"><use href="#xx"/></svg></div>
    <div class="d-flex">
      <div class="tree flex-grow-1">
        <div class="trow d-flex align-items-center" style="padding-left:5px"><svg width="8" height="5" style="margin-right:5px"><use href="#cd"/></svg><div class="d-flex align-items-center flex-grow-1" style="background:var(--rib);height:20px;padding-left:2px"><svg width="14" height="16" style="margin-right:7px"><use href="#rep"/></svg>Report1</div></div>
        <div class="trow d-flex align-items-center" style="padding-left:38px;gap:8px"><svg width="14" height="15"><use href="#tm"/></svg>TopMargin</div>
        <div class="trow d-flex align-items-center" style="padding-left:25px;gap:8px"><svg width="5" height="8"><use href="#cr"/></svg><svg width="14" height="16"><use href="#rh"/></svg>ReportHeader</div>
        <div class="trow d-flex align-items-center" style="padding-left:25px;gap:8px"><svg width="5" height="8"><use href="#cr"/></svg><svg width="14" height="15"><use href="#gh"/></svg>GroupHeader2</div>
        <div class="trow d-flex align-items-center" style="padding-left:25px;gap:8px"><svg width="5" height="8"><use href="#cr"/></svg><svg width="14" height="15"><use href="#gh"/></svg>GroupHeader1</div>
        <div class="trow d-flex align-items-center" style="padding-left:25px;gap:8px"><svg width="5" height="8"><use href="#cr"/></svg><svg width="14" height="15"><use href="#det"/></svg>Detail</div>
        <div class="trow d-flex align-items-center" style="padding-left:25px;gap:8px"><svg width="5" height="8"><use href="#cr"/></svg><svg width="14" height="15"><use href="#gf"/></svg>GroupFooter1</div>
        <div class="trow d-flex align-items-center" style="padding-left:25px;gap:8px"><svg width="5" height="8"><use href="#cr"/></svg><svg width="14" height="15"><use href="#bm"/></svg>BottomMargin</div>
        <div class="trow d-flex align-items-center" style="padding-left:5px"><svg width="8" height="5" style="margin-right:6px"><use href="#cd"/></svg><svg width="17" height="16" style="margin-right:5px"><path d="M2.500 13H.5V.5h11V2" fill="none" stroke="#646464"/><use href="#sty" x="2" y="1" width="15" height="15"/></svg>Styles</div>
        <div class="trow d-flex align-items-center" style="padding-left:38px;gap:6px"><svg width="15" height="15"><use href="#sty"/></svg>DetailCaption1</div>
        <div class="trow d-flex align-items-center" style="padding-left:38px;gap:6px"><svg width="15" height="15"><use href="#sty"/></svg>DetailData1</div>
        <div class="trow d-flex align-items-center" style="padding-left:38px;gap:6px"><svg width="15" height="15"><use href="#sty"/></svg>DetailData3_Odd</div>
        <div class="trow d-flex align-items-center" style="padding-left:38px;gap:6px"><svg width="15" height="15"><use href="#sty"/></svg>GroupCaption1</div>
        <div class="trow d-flex align-items-center" style="padding-left:38px;gap:6px"><svg width="15" height="15"><use href="#sty"/></svg>GroupData1</div>
        <div class="trow d-flex align-items-center" style="padding-left:38px"><svg width="15" height="15"><use href="#sty"/></svg></div>
      </div>
      <div class="vscroll d-flex flex-column align-items-center justify-content-between" style="padding:7px 0"><svg width="7" height="5"><path d="M0 5h7L3.500 0z" fill="#707070"/></svg><div style="width:17px;height:17px;background:#cfcfcf;margin:5px 0 auto"></div><svg width="7" height="5"><path d="M0 0h7L3.500 5z" fill="#707070"/></svg></div>
    </div>
    <div class="ptabs d-flex">
      <div class="ptab active d-flex align-items-center" style="width:112px;padding-left:9px;gap:5px"><svg width="13" height="13"><path d="M4 0h5v4H4zM0 9h5v4H0zM8 9h5v4H8z" fill="#ffa90f"/><path d="M6.500 4v2.500M2.500 9V6.500h8V9" fill="none" stroke="#646464"/></svg>Report Explorer</div>
      <div class="ptab d-flex align-items-center" style="padding-left:10px;gap:4px"><svg width="14" height="14"><path d="M0 2c0-3 10-3 10 0v2c0 2-10 2-10 0zM0 6c1 1 4 1.500 5 1.200V10C3 10 0 9 0 8zM0 10c1 1 4 1.200 5 1.200V13c-2 0-5-.5-5-2z" fill="#ffa90f"/><path d="M6.500 7.500h7v2h-7zM6.500 11h7v2h-7z" fill="#eee" stroke="#646464"/></svg>Field List</div>
    </div>
    <div class="phead d-flex align-items-center" style="height:28px;border-top:1px solid #c0c0c0;border-bottom:1px solid #ccc;padding:0 10px 0 7px">Properties<svg width="9" height="9" class="ms-auto"><use href="#sq"/></svg><svg width="8" height="10" style="margin:0 23px 0 24px"><use href="#pin"/></svg><svg width="9" height="9"><use href="#xx"/></svg></div>
    <div class="fld fb d-flex align-items-center" style="height:22px;margin:9px 11px 0;padding:0 5px;font-size:11.5px"><span style="margin-right:10px">Report1</span>Report<svg width="6" height="4" class="ms-auto"><use href="#caret"/></svg></div>
    <div class="d-flex align-items-center" style="height:48px;padding-top:11px;border-bottom:1px solid #ccc">
      <div style="width:44px;height:38px;border-bottom:2px solid var(--red);padding:10px 0 0 12px"><svg width="21" height="19"><path d="M16 0c2 0 4 2 4 4l-5.500 5-4-4z" fill="#e03848"/><path d="M10 6l4 4-3.500 3-4-4z" fill="#646464"/><path d="M6.500 10l3.500 3.500C8 17 5 18 0 18c3-1 3-6 6.500-8z" fill="#ffa90f"/></svg></div>
      <svg width="20" height="20" style="margin:0 27px 0 12px"><g fill="none" stroke="#3a75c4"><circle cx="5.500" cy="14.500" r="3" stroke-width="2.400"/><circle cx="5.500" cy="14.500" r="4.600" stroke-width="1.800" stroke-dasharray="2.400 2.400"/><circle cx="14.500" cy="5.500" r="3" stroke-width="2.400"/><circle cx="14.500" cy="5.500" r="4.600" stroke-width="1.800" stroke-dasharray="2.400 2.400"/></g></svg>
      <svg width="15" height="18" style="margin-right:26px"><path d="M0 3c0-4 15-4 15 0v2c0 3-15 3-15 0zM0 7c2 2.500 13 2.500 15 0v4c0 3-15 3-15 0zM0 13c2 2.500 13 2.500 15 0v2c0 4-15 4-15 0z" fill="#ffa90f"/></svg>
      <svg width="18" height="20" style="margin-right:26px"><path d="M6.500 6.500h10v12h-10z" fill="none" stroke="#646464" stroke-width="2"/><path d="M0 5.500h4M0 18.500h4M2 5.500v13M6 0v4M17 0v4M6 2h11" stroke="#3a75c4" stroke-width="1.600"/></svg>
      <svg width="19" height="18" style="margin-right:25px"><path d="M1 2.500l4 4 2.500-2.500-3-3.500C9 -.5 13 2 12 7l7 7c1 2-1.500 5-4 4L8.500 11C4 12.500-1 8 1 2.500z" fill="#646464"/></svg>
      <svg width="20" height="18"><path d="M10 0l2.600 6.500 7.400.2-5.900 4.300 2.200 7L10 14l-6.300 4 2.200-7L0 6.700l7.400-.2z" fill="#3a75c4"/></svg>
    </div>
    <div style="padding-top:10px;height:272px;border-bottom:1px solid #bdbdbd">
      <div class="prow d-flex align-items-center"><div class="plabel">Background Color</div><div class="pfield d-flex align-items-center"><div class="swatch checker"></div><svg width="15" height="15" style="margin:0 7px 0 4px"><use href="#eye"/></svg><svg width="6" height="4"><use href="#caret"/></svg></div><div class="dot"></div></div>
      <div class="prow d-flex align-items-center"><div class="plabel">Border Color</div><div class="pfield d-flex align-items-center"><div class="swatch"></div><svg width="15" height="15" style="margin:0 7px 0 4px"><use href="#eye"/></svg><svg width="6" height="4"><use href="#caret"/></svg></div><div class="dot"></div></div>
      <div class="prow d-flex align-items-center"><div class="plabel">Border Dash Style</div><div class="pfield d-flex align-items-center justify-content-between" style="padding:0 5px 0 3px"><svg width="60" height="2"><path d="M0 1h60" stroke="#646464" stroke-width="2"/></svg><svg width="6" height="4"><use href="#caret"/></svg></div><div class="dot"></div></div>
      <div class="prow d-flex align-items-center"><div class="plabel">Border Width</div><svg width="121" height="12"><path d="M2 6h114" stroke="#c3c3c3" stroke-width="3"/><path d="M2 6h14" stroke="#fb5759" stroke-width="3"/><circle cx="16.500" cy="6" r="5.700" fill="#fb5759"/></svg><div class="pfield d-flex align-items-center justify-content-between" style="width:60px;padding:0 5px">1<svg width="6" height="13"><use href="#spin"/></svg></div><div class="dot"></div></div>
      <div class="prow d-flex align-items-center"><div class="plabel">Borders</div>
        <div class="d-flex align-items-center justify-content-end" style="width:175px">
          <svg width="13" height="13" style="margin-right:6px"><use href="#ball"/></svg><div class="d-flex align-items-center justify-content-center" style="width:22px;height:22px;background:var(--sel)"><svg width="13" height="13"><use href="#dots"/></svg></div>
          <div style="height:18px;border-left:1px solid #c6c6c6;margin:0 10px 0 2px"></div>
          <svg width="13" height="13"><use href="#dots"/><path d="M.6 0v13" stroke="#505050" stroke-width="1.300"/></svg>
          <svg width="13" height="13" style="margin-left:10px"><use href="#dots"/><path d="M0 .6h13" stroke="#505050" stroke-width="1.300"/></svg>
          <svg width="13" height="13" style="margin-left:10px"><use href="#dots"/><path d="M12.400 0v13" stroke="#505050" stroke-width="1.300"/></svg>
          <svg width="13" height="13" style="margin-left:10px"><use href="#dots"/><path d="M0 12.400h13" stroke="#505050" stroke-width="1.300"/></svg>
        </div><div class="dot" style="margin-left:16px"></div></div>
      <div class="prow d-flex align-items-center"><div class="plabel pt-1">Font</div><div class="pfield d-flex align-items-center justify-content-between" style="padding:0 5px">Arial<svg width="6" height="4"><use href="#caret"/></svg></div><div class="dot"></div></div>
      <div class="prow d-flex align-items-center"><div class="plabel"></div><div class="pfield d-flex align-items-center justify-content-between" style="width:60px;padding:0 5px;letter-spacing:.1px">9.75<svg width="6" height="13"><use href="#spin"/></svg></div>
        <div class="slab" style="width:30px">B</div><div class="slab fst-italic" style="width:22px">I</div><div class="slab text-decoration-underline" style="width:29px">U</div><div class="slab text-decoration-line-through" style="width:24px">S</div></div>
      <div class="prow d-flex align-items-center"><div class="plabel">Foreground Color</div><div class="pfield d-flex align-items-center"><div class="swatch"></div><svg width="15" height="15" style="margin:0 7px 0 4px"><use href="#eye"/></svg><svg width="6" height="4"><use href="#caret"/></svg></div><div class="dot"></div></div>
      <div class="prow d-flex align-items-center"><div class="plabel pt-1">Padding</div><div class="pfield d-flex align-items-center" style="padding:0 5px;letter-spacing:0">0, 0, 0, 0</div><div class="dot"></div></div>
      <div class="prow d-flex align-items-center"><div class="plabel"></div>
        <svg width="16" height="12" style="margin:0 9px 0 1px"><path d="M1 0v12M15 6H5M9.500 1.500L5 6l4.500 4.500" fill="none" stroke="#646464" stroke-width="1.800"/></svg>
        <div class="pfield d-flex align-items-center justify-content-between" style="width:62px;padding:0 5px">0<svg width="6" height="13"><use href="#spin"/></svg></div>
        <svg width="16" height="12" style="margin:0 8px 0 6px"><path d="M14 0v12M0 6h10M5.500 1.500L10 6l-4.500 4.500" fill="none" stroke="#646464" stroke-width="1.800"/></svg>
        <div class="pfield d-flex align-items-center justify-content-between" style="width:62px;padding:0 5px">0<svg width="6" height="13"><use href="#spin"/></svg></div>
      </div>
    </div>
    <div style="padding:18px 0 0 8px;letter-spacing:-.17px"><div class="fb" style="font-size:11.5px;margin-bottom:6px;letter-spacing:-.3px">Background Color</div>Gets or sets the control's background color.</div>
    <div class="ptabs d-flex mt-auto">
      <div class="ptab active d-flex align-items-center" style="width:85px;padding-left:9px;gap:4px"><svg width="15" height="14"><path d="M0 0h12v2.500H0z" fill="#3a75c4"/><path d="M0 4h3v2H0zM4 4h4v2H4zM9 4h3v2H9zM0 7.500h3v2H0zM4 7.500h3v2H4zM0 10.500h3v1.500H0zM4 10.500h3v1.500H4z" fill="#a0a0a0"/><circle cx="11" cy="10" r="2.500" fill="none" stroke="#3a75c4" stroke-width="2"/><circle cx="11" cy="10" r="3.600" fill="none" stroke="#3a75c4" stroke-dasharray="1.800 1.900" stroke-width="1"/></svg>Properties</div>
      <div class="ptab d-flex align-items-center" style="padding-left:9px;gap:4px"><svg width="14" height="15"><path d="M2 12H.6V.6h11V2M2.600 2.600h10.800v11.800H2.600z" fill="none" stroke="#646464" stroke-width="1.200"/><path d="M4 9h2v3.500H4z" fill="#ffa90f"/><path d="M7 7.500h2v5H7z" fill="#3a75c4"/><path d="M10 5.500h2v7h-2z" fill="#e03848"/></svg>Report Gallery</div>
    </div>
  </aside>
</main>

<!-- status bar -->
<footer class="statusbar d-flex align-items-center" style="padding:0 7px 0 7px">Report1 { PaperKind: Letter }
  <span class="ms-auto" style="margin-right:13px;letter-spacing:.1px">100%</span>
  <svg width="12" height="12"><circle cx="6" cy="6" r="5.700" fill="#a9b1bb"/><path d="M3 6h6" stroke="#465c7b" stroke-width="1.300"/></svg>
  <svg width="106" height="12" style="margin:0 6px"><path d="M0 6h106" stroke="#a9b1bb" stroke-width="3"/><path d="M0 6h52" stroke="#fb5759" stroke-width="3"/><circle cx="52.500" cy="6" r="5.700" fill="#fb5759"/></svg>
  <svg width="12" height="12"><circle cx="6" cy="6" r="5.700" fill="#a9b1bb"/><path d="M3 6h6M6 3v6" stroke="#465c7b" stroke-width="1.300"/></svg>
</footer>

<!-- taskbar -->
<div class="taskbar d-flex">
  <div class="tk d-flex align-items-center justify-content-center" style="padding-right:2px"><svg width="16" height="16"><path d="M0 2.300L6.500 1.300v6.200H0zM7.500 1.200L16 0v7.500H7.500zM0 8.500h6.500v6.200L0 13.700zM7.500 8.500H16V16l-8.500-1.200z" fill="#fff"/></svg></div>
  <div class="tk d-flex align-items-center justify-content-center" style="padding-right:2px"><svg width="17" height="15"><path d="M1 0v2.500h10V0M1 15v-2.500h10V15M1 4.500h10v6H1zM14.500 0v3M14.500 8v7" fill="none" stroke="#fff" stroke-width="1.200"/><path d="M13 4h3v3h-3z" fill="#fff"/></svg></div>
  <div class="tk run d-flex align-items-center justify-content-center"><svg width="26" height="25" style="margin-left:3px"><path d="M0 3l13-3v22L0 19.500z" fill="#0072c6"/><path d="M13 5h10v9H13z" fill="#e8f2fb"/><path d="M14 9l3 3 5-6" fill="none" stroke="#0072c6" stroke-width="2"/><circle cx="6.500" cy="11" r="3" fill="none" stroke="#fff" stroke-width="2"/><path d="M10 14h16v11H10z" fill="#eab978"/><path d="M10 14.500l8 6 8-6" fill="none" stroke="#fff" stroke-width="1.300"/></svg></div>
  <div class="tk run d-flex align-items-center justify-content-center"><svg width="21" height="22"><path d="M0 10C1 3 5 0 10.500 0 17 0 20.500 5 20.500 10v2.500H6.500c.5 5 7.500 6 12 3v4.500C12 23.500 2.500 22 2.500 13.500 2.500 9 5 6.500 8 5 3.500 5.500 1.500 8 0 10zM6.800 8.500h7.500c0-5-6.500-5-7.500 0z" fill="#0078d7"/></svg></div>
  <div class="tk d-flex align-items-center justify-content-center"><svg width="24" height="22"><ellipse cx="11" cy="9" rx="11.500" ry="6.500" transform="rotate(-27 11 9)" fill="#b9bcc0"/><ellipse cx="12" cy="7.500" rx="10" ry="5.500" transform="rotate(-27 12 7.500)" fill="#f4f4f4" stroke="#cf3b3b" stroke-width="1.200"/><path d="M12 4l1 7 3-5" stroke="#777" fill="none"/><path d="M12 11l7 6M18 11l-3 6" stroke="#9fb4c4" stroke-width="1.500"/><circle cx="15" cy="18.500" r="2.300" fill="none" stroke="#2a7fc0" stroke-width="1.600"/><circle cx="20.500" cy="16" r="2.300" fill="none" stroke="#2a7fc0" stroke-width="1.600"/></svg></div>
  <div class="tk run multi d-flex align-items-center justify-content-center"><svg width="22" height="19"><path d="M0 0h8l2 2h12v15H0z" fill="#f3c041"/><path d="M0 4h22v14H0z" fill="#ffd972"/><path d="M4 10h14v8h-4v-4H8v4H4z" fill="#3b8ed4"/></svg></div>
  <div class="tk run d-flex align-items-center justify-content-center"><svg width="22" height="22"><path d="M12 3h9.500v16H12z" fill="#fff" stroke="#1f7145"/><path d="M14 6h3M18 6h3M14 9h3M18 9h3M14 12h3M18 12h3M14 15h3M18 15h3" stroke="#1f7145" stroke-width="1.500"/><path d="M0 2.500L13 0v22L0 19.500z" fill="#1f7145"/><path d="M4 7l5 8M9 7l-5 8" stroke="#fff" stroke-width="1.800"/></svg></div>
  <div class="tk run multi d-flex align-items-center justify-content-center"><svg width="24" height="24"><path d="M18 0l6 2.500v19L18 24 8 14l-5.500 4L0 16.500v-9L2.500 6 8 10zM18 7l-6 5 6 5zM2.500 9v6l3-3z" fill="#865fc5" fill-rule="evenodd"/><path d="M18 0l6 2.500v19L18 24z" fill="#b68be8"/></svg></div>
  <div class="tk run act d-flex align-items-center justify-content-center"><svg width="24" height="24"><circle cx="12" cy="12" r="9.800" fill="none" stroke="#f97b16" stroke-width="4" stroke-dasharray="3.850 3.850"/><circle cx="12" cy="12" r="8.500" fill="#f97b16"/><circle cx="12" cy="12" r="5.500" fill="#fff"/><path d="M8 9c2.500-1.500 6 0 6 3s-3.500 4.500-6 3M9 12h4" stroke="#f97b16" stroke-width="1.500" fill="none"/></svg></div>
  <div class="ms-auto d-flex align-items-center">
    <svg width="12" height="8"><path d="M.7 7L6 1.500 11.300 7" fill="none" stroke="#fff" stroke-width="1.300"/></svg>
    <svg width="17" height="11" style="margin-left:9px"><path d="M4 3c2-4 7-4 8 0 3 0 5 2 5 4 0 3-2 3.500-3 3.500H4C-1 10.500-1 4 4 4z" fill="#c9ced6"/><path d="M2 8c1-3 5-4 7-1.500 3-2 7-1 7.500 1.500-.5 2-2 2.500-3 2.500H4z" fill="#fff"/></svg>
    <svg width="17" height="14" style="margin-left:7px"><path d="M4.500 1.500h11.500v8.500H4.500V6M10 10v3M6.500 13h7" fill="none" stroke="#fff" stroke-width="1.200"/><path d="M.6.6h4v4h-4zM2.500 5v3h2" fill="none" stroke="#fff" stroke-width="1.200"/></svg>
    <svg width="14" height="13" style="margin-left:8px"><path d="M3.500 0L7 2.300 3.500 4.600 0 2.300zM10.500 0L14 2.300l-3.500 2.300L7 2.300zM3.500 4.600L7 6.900 3.500 9.200 0 6.900zM10.500 4.600L14 6.900l-3.500 2.300L7 6.900zM7 7.900l3.300 2.300L7 12.500l-3.300-2.300z" fill="#a7afbb"/></svg>
    <div class="text-center" style="width:73px;line-height:18px">11:09 AM<br>11/26/2019</div>
    <svg width="24" height="24" style="margin:2px 12px 0 8px" font-family="Open Sans" font-size="10" font-weight="700"><path d="M0 0h16v12H9l-5 4v-4H0z" fill="#fff"/><path d="M3 3.500h10M3 6h10M3 8.500h10" stroke="#1a2842" stroke-width="1"/><circle cx="15.500" cy="15" r="7.800" fill="#2b2d33" stroke="#8f949b"/><text x="15.500" y="18.700" text-anchor="middle" fill="#fff" letter-spacing="0">6</text></svg>
    <div style="height:40px;width:5px;border-left:1px solid #6a7486"></div>
  </div>
</div>
</body>
</html>
